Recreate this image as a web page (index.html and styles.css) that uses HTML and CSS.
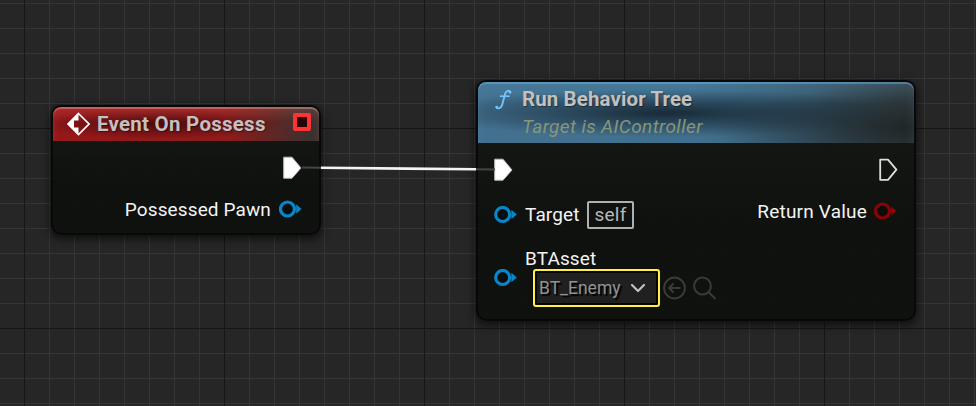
FILE: index.html
```html
<!DOCTYPE html>
<html lang="en">
<head>
<meta charset="utf-8">
<title>Blueprint graph</title>
<link rel="stylesheet" href="styles.css">
</head>
<body>
<main class="graph">
  <section class="node node-event">
    <header class="head head-event">
      <svg class="event-icon" width="24" height="24" viewBox="0 0 24 24"><path d="M12.5 1.5 23 12 12.5 22.5 2 12Z" fill="none" stroke="#fff" stroke-width="1.6"/><path d="M12.5 1 1.5 12 12.5 23V15.5H8V8.5H12.5Z" fill="#fff"/></svg>
      <h2 class="title">Event On Possess</h2>
      <span class="delegate"></span>
    </header>
    <div class="row row-exec">
      <svg class="exec" width="20" height="24" viewBox="0 0 20 24"><path d="M1.7 1.2H10L19 12 10 22.2H1.7Z" fill="#fff" stroke="#bbb" stroke-width="1"/></svg>
    </div>
    <div class="row row-pawn">
      <span class="label">Possessed Pawn</span>
      <svg class="pin blue" width="24" height="18" viewBox="0 0 24 18"><circle cx="8.5" cy="9" r="7"/><path d="M17.2 4.2 22.5 9 17.2 13.8Z"/></svg>
    </div>
  </section>

  <section class="node node-run">
    <header class="head head-run">
      <svg class="fn-icon" width="18" height="22" viewBox="0 0 18 22"><path d="M15.5 3.2C14.5 .8 11 1.5 10.2 4.6L7.2 15.8C6.2 19.5 2.5 20.3 1.2 18.2" fill="none" stroke="#72c4fa" stroke-width="1.9" stroke-linecap="round"/><path d="M4.8 7.2H14.6" stroke="#72c4fa" stroke-width="1.6"/><circle cx="15" cy="3.2" r="1.2" fill="#72c4fa"/><circle cx="1.9" cy="18" r="1.3" fill="#72c4fa"/></svg>
      <div class="heading">
        <h2 class="title">Run Behavior Tree</h2>
        <p class="subtitle">Target is AIController</p>
      </div>
    </header>
    <div class="body">
      <div class="inputs">
        <svg class="exec" width="20" height="24" viewBox="0 0 20 24"><path d="M1.7 1.2H10L19 12 10 22.2H1.7Z" fill="#fff" stroke="#bbb" stroke-width="1"/></svg>
        <div class="row row-target">
          <svg class="pin blue" width="24" height="18" viewBox="0 0 24 18"><circle cx="8.7" cy="8.5" r="7"/><path d="M17.4 3.7 22.8 8.5 17.4 13.3Z"/></svg>
          <span class="label label-target">Target</span>
          <span class="self">self</span>
        </div>
        <div class="row row-asset">
          <svg class="pin blue" width="24" height="18" viewBox="0 0 24 18"><circle cx="8.7" cy="8.5" r="7"/><path d="M17.4 3.7 22.8 8.5 17.4 13.3Z"/></svg>
          <div class="asset">
            <span class="label label-asset">BTAsset</span>
            <div class="picker">
              <button class="select"><span class="value">BT_Enemy</span><svg width="16" height="10" viewBox="0 0 16 10"><path d="M2 2 8 8 14 2" fill="none" stroke="#c0c0c0" stroke-width="2.2" stroke-linecap="round" stroke-linejoin="round"/></svg></button>
              <svg class="tool" width="24" height="24" viewBox="0 0 24 24"><circle cx="11.5" cy="12" r="10.4"/><path d="M17.5 12H6.5M10.5 7.5 6 12 10.5 16.5"/></svg>
              <svg class="tool find" width="24" height="24" viewBox="0 0 24 24"><circle cx="9.5" cy="10" r="8.4"/><path d="M15.5 16 22.5 23"/></svg>
            </div>
          </div>
        </div>
      </div>
      <div class="outputs">
        <svg class="exec" width="20" height="24" viewBox="0 0 20 24"><path d="M2.2 1.6H10L18.4 11.7 10 21.8H2.2Z" fill="none" stroke="#dedede" stroke-width="1.8" stroke-linejoin="round"/></svg>
        <div class="row row-return">
          <span class="label label-return">Return Value</span>
          <svg class="pin red" width="24" height="18" viewBox="0 0 24 18"><circle cx="8.5" cy="9" r="7"/><path d="M17.2 4.2 22.5 9 17.2 13.8Z"/></svg>
        </div>
      </div>
    </div>
  </section>

  <svg class="wires" width="976" height="406" viewBox="0 0 976 406">
    <path d="M302 167.6 321 167.8M476 169.2 495 169.5" stroke="#444644" stroke-width="2"/>
    <path d="M321 167.7C380 168 420 169 476 169.3" fill="none" stroke="#f4f4f4" stroke-width="2.6"/>
  </svg>
</main>
</body>
</html>
```
FILE: styles.css
```css
* { box-sizing: border-box; }
body { margin: 0; overflow: hidden; font-family: Roboto, sans-serif; }
svg { display: block; flex: none; }
h2, p { margin: 0; }

.graph {
  position: relative;
  width: 976px;
  height: 406px;
  background-color: #262626;
  background-image:
    linear-gradient(90deg, #161616 1px, transparent 1px),
    linear-gradient(#161616 1px, transparent 1px),
    linear-gradient(90deg, #353535 1px, transparent 1px),
    linear-gradient(#353535 1px, transparent 1px);
  background-size: 200px 200px, 200px 200px, 25px 25px, 25px 25px;
  background-position: 24px 0, 0 128px, 24px 0, 0 3px;
}

.node {
  position: absolute;
  border: 2px solid #070807;
  border-radius: 10px;
  background: linear-gradient(rgba(22, 24, 21, .9), rgba(13, 16, 13, .94) 60%);
  box-shadow: 0 3px 9px 1px rgba(0, 0, 0, .6);
}
.node-event { left: 51px; top: 105px; width: 270px; height: 130px; }
.node-run { left: 476px; top: 80px; width: 440px; height: 241px; }

.head { display: flex; border-radius: 8px 8px 0 0; }
.head-event {
  height: 34px;
  padding: 5px 8px 0 13px;
  background:
    radial-gradient(ellipse 125px 15px at 105px 17px, rgba(45, 5, 5, .7), rgba(45, 5, 5, 0)),
    linear-gradient(90deg, #971719 0, #8f1a1c 65%, #622624 82%, #383230 97%);
  box-shadow: inset 0 2px 1px rgba(255, 190, 180, .4), inset 0 9px 9px rgba(255, 130, 120, .15);
}
.head-run {
  height: 61px;
  padding: 7px 0 0 17px;
  background:
    radial-gradient(ellipse 240px 24px at 190px 31px, rgba(20, 35, 46, .9), rgba(20, 35, 46, 0)),
    radial-gradient(ellipse 200px 42px at 100% 75%, rgba(28, 34, 34, .85), rgba(28, 34, 34, 0)),
    linear-gradient(90deg, #43708f 0, #41708e 50%, #3a5d73 75%, #343f44 98%);
  box-shadow: inset 0 2px 1px rgba(110, 180, 225, .5), inset 0 12px 12px rgba(100, 165, 205, .15);
}

.title { font-size: 20.5px; line-height: 24px; font-weight: 700; color: #c3c0c0; white-space: nowrap; letter-spacing: .25px; text-shadow: 1px 1px 1px rgba(0, 0, 0, .4); }
.heading .title { letter-spacing: .1px; }
.event-icon { margin-right: 7px; }
.delegate { width: 18px; height: 18px; margin: 1px 0 0 auto; border: 4px solid #fd3434; border-radius: 2px; background: #280505; }
.fn-icon { margin-right: 9px; }
.heading { margin-top: -2px; }
.subtitle { margin-top: 4px; font-size: 19px; line-height: 24px; font-style: italic; color: #879679; letter-spacing: .36px; white-space: nowrap; }

.row { display: flex; }
.label { font-size: 19px; line-height: 22px; color: #f4f4f4; letter-spacing: .12px; white-space: nowrap; }
.row-exec { justify-content: flex-end; padding: 15px 17px 0 0; }
.row-pawn { justify-content: flex-end; padding: 19px 16px 0 0; }
.row-pawn .pin { margin: 1px 0 0 8px; }

.pin circle { stroke-width: 3.2; fill: #07100f; }
.blue circle { stroke: #0787ca; }
.blue path { fill: #0787ca; }
.red circle { stroke: #890305; fill: #0c0b09; }
.red path { fill: #890305; }

.body { display: flex; justify-content: space-between; padding: 15px 16px 0 16px; }
.inputs .exec { margin-left: -1px; }
.row-target { margin-top: 19px; align-items: center; height: 28px; }
.label-target { width: 54px; margin-left: 7px; }
.self { width: 47px; height: 28px; margin-left: 8px; border: 2px solid #b0b0b0; border-radius: 2px; font-size: 19px; line-height: 23px; text-align: center; color: #b8b8b8; letter-spacing: .2px; }
.row-asset { margin-top: 19px; }
.row-asset .pin { margin-top: 21px; }
.asset { margin-left: 7px; }
.label-asset { display: block; }
.picker { display: flex; align-items: center; margin: -1px 0 0 8px; }
.select { display: flex; align-items: center; justify-content: space-between; width: 127px; height: 38px; padding: 0 12px 0 4px; border: 2px solid #fff043; border-radius: 3px; background: #1f201f; box-shadow: inset 0 0 0 2px #050505; font: 17.5px/24px Roboto, sans-serif; color: #929292; }
.value { letter-spacing: 0; text-shadow: 2px 2px 1px #000; }
.tool { margin-left: 3px; fill: none; stroke: #393b39; stroke-width: 2; }
.find { margin-left: 6px; }

.outputs { display: flex; flex-direction: column; align-items: flex-end; }
.row-return { margin-top: 19px; }
.row-return .pin { margin: 1px 0 0 7px; }
.label-return { letter-spacing: .2px; }
.wires { position: absolute; inset: 0; pointer-events: none; }
```
